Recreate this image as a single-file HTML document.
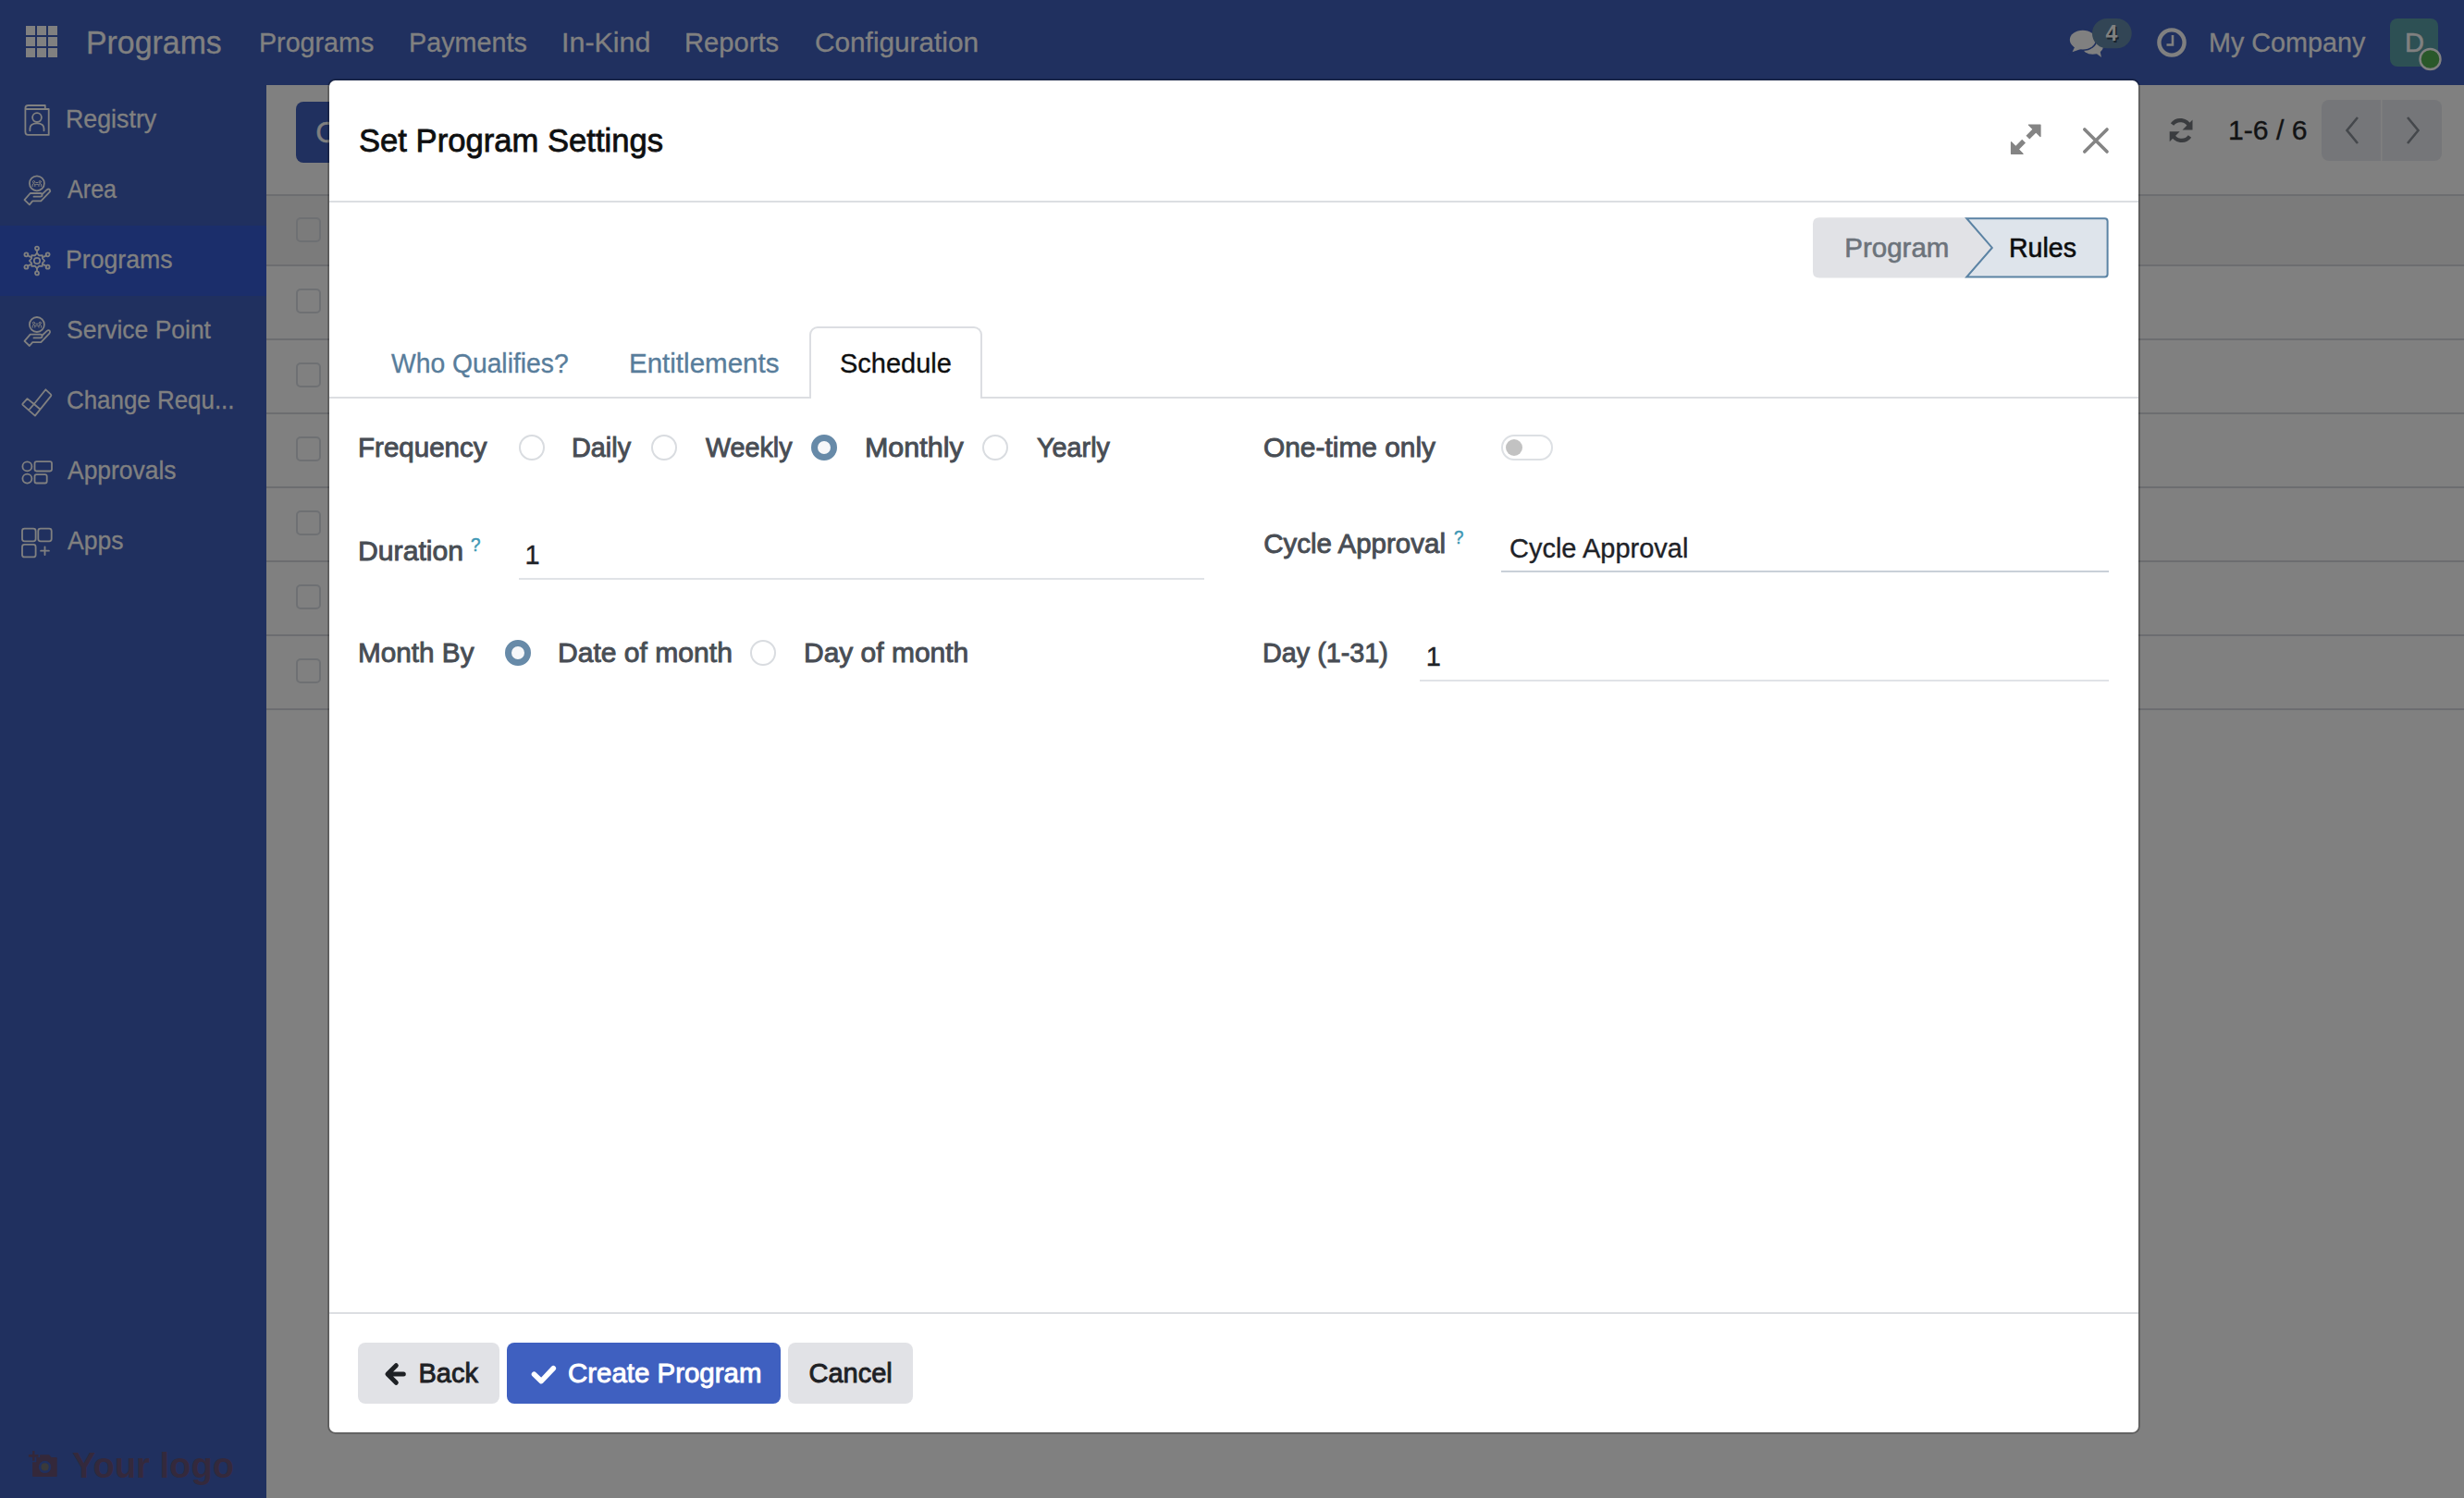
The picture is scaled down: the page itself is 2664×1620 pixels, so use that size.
<!DOCTYPE html>
<html><head><meta charset="utf-8"><title>Set Program Settings</title>
<style>
*{margin:0;padding:0;box-sizing:border-box}
html,body{width:2664px;height:1620px;overflow:hidden;background:#808080;font-family:"Liberation Sans",sans-serif}
.a{position:absolute}
.t{position:absolute;white-space:nowrap;transform-origin:0 0;font-family:"Liberation Sans",sans-serif}
svg{position:absolute;overflow:visible}
.rl{position:absolute;left:288px;width:2376px;height:2px;background:#6c6d70}
.cb{position:absolute;left:320px;width:27px;height:27px;border:2px solid #6e7073;border-radius:5px}
.radio{position:absolute;width:28px;height:28px;border-radius:50%;border:2px solid #d9dce0;background:#fff}
.radio.on{border:7.8px solid #678aa8;background:#f6f7f9}
.btn{position:absolute;border-radius:8px}

</style></head><body>
<!-- navbar -->
<div class=a style="left:0;top:0;width:2664px;height:92px;background:#20305f"></div>
<svg style="left:28px;top:28px" width="34" height="34" viewBox="0 0 34 34" fill="#808080">
<rect x="0" y="0" width="10" height="10"/><rect x="12" y="0" width="10" height="10"/><rect x="24" y="0" width="10" height="10"/>
<rect x="0" y="12" width="10" height="10"/><rect x="12" y="12" width="10" height="10"/><rect x="24" y="12" width="10" height="10"/>
<rect x="0" y="24" width="10" height="10"/><rect x="12" y="24" width="10" height="10"/><rect x="24" y="24" width="10" height="10"/>
</svg>
<!-- chat icon -->
<svg style="left:0;top:0" width="2664" height="92" viewBox="0 0 2664 92">
 <g fill="#808080">
  <ellipse cx="2262.5" cy="50" rx="11.5" ry="8.7"/>
  <path d="M2264 56 L2272 62 L2270 53 Z"/>
 </g>
 <ellipse cx="2251.8" cy="43.1" rx="15.6" ry="12" fill="#20305f"/>
 <path d="M2243 50 L2239.5 56.8 L2252 52.5 Z" fill="#20305f" stroke="#20305f" stroke-width="3"/>
 <g fill="#808080">
  <ellipse cx="2251.8" cy="43.1" rx="14" ry="10.4"/>
  <path d="M2243.5 50 L2240.5 56.2 L2250.5 52.8 Z"/>
 </g>
 <rect x="2262" y="20" width="42.7" height="32.2" rx="16" fill="#324555"/>
 <text x="2284.5" y="45.5" font-family="Liberation Sans" font-size="23" font-weight="700" text-anchor="middle" fill="#18222c">4</text>
 <text x="2283" y="44" font-family="Liberation Sans" font-size="23" font-weight="700" text-anchor="middle" fill="#808080">4</text>
 <!-- clock -->
 <circle cx="2348" cy="46" r="13.6" fill="none" stroke="#808080" stroke-width="4.4"/>
 <path d="M2349 38 V48.5 H2342.5" fill="none" stroke="#808080" stroke-width="2.6"/>
 <!-- avatar -->
 <rect x="2584" y="20" width="52" height="52" rx="8" fill="#2d5054"/>
 <text x="2610.5" y="55.8" font-family="Liberation Sans" font-size="29" text-anchor="middle" fill="#808080" stroke="#808080" stroke-width="0.6">D</text>
 <circle cx="2627.5" cy="64" r="11" fill="#2a582a" stroke="#808080" stroke-width="2.4"/>
</svg>
<!-- sidebar -->
<div class=a style="left:0;top:92px;width:288px;height:1528px;background:#20305f"></div>
<div class=a style="left:0;top:244px;width:288px;height:76px;background:#1b2e6b"></div>
<svg style="left:0;top:0" width="288" height="1620" viewBox="0 0 288 1620" fill="none" stroke="#808080" stroke-width="1.8" stroke-linecap="round" stroke-linejoin="round">
 <!-- registry -->
 <path d="M30.5 114 H48.8 V118 M27.4 118 H52.7 V145.9 H30.5 Q27.4 145.9 27.4 142.8 V117.1 Q27.4 114 30.5 114"/>
 <circle cx="40" cy="127.1" r="4.9"/>
 <path d="M32.4 141.3 V139 Q32.4 133.4 40 133.4 Q47.5 133.4 47.5 139 V141.3"/>
 <!-- area -->
 <g id="hand1">
 <circle cx="39.9" cy="198.3" r="8"/>
 <path d="M35.2 201.5 V200 Q35.2 198.6 36.5 198.6 Q37.8 198.6 37.8 200 M42 200 Q42 198.6 43.3 198.6 Q44.6 198.6 44.6 200 V201.5 M37.8 201.5 V200.6 Q37.8 199.3 39.9 199.3 Q42 199.3 42 200.6 V201.5" stroke-width="1"/>
 <circle cx="36.5" cy="196.6" r="1.1" stroke-width="1"/><circle cx="43.3" cy="196.6" r="1.1" stroke-width="1"/><path d="M38.8 197.5 H41" stroke-width="1"/>
 <path d="M36.5 212.7 H43.7 Q45.6 212.7 45.6 210.85 Q45.6 209 43.9 209 H32.7 L26.5 216.2 L31.9 221.3 L35.2 217.4 H44.3 L53.4 207.9 Q54.8 206.4 53.7 205 Q52.4 203.8 50.7 205.2 L45.3 210.3"/>
 </g>
 <!-- programs (network) -->
 <g transform="translate(40,282)">
  <circle r="3.2"/>
  <path d="M0 -8.2 L2.3 -5.6 L5.8 -5.8 L6 -2.3 L8.2 0 L6 2.3 L5.8 5.8 L2.3 5.6 L0 8.2 L-2.3 5.6 L-5.8 5.8 L-6 2.3 L-8.2 0 L-6 -2.3 L-5.8 -5.8 L-2.3 -5.6 Z" transform="rotate(0)"/>
  <path d="M0 -8.2 V-11.6 M7.1 -4.1 L10.1 -5.8 M7.1 4.1 L10.1 5.8 M0 8.2 V11.6 M-7.1 4.1 L-10.1 5.8 M-7.1 -4.1 L-10.1 -5.8"/>
  <circle cy="-13.4" r="2"/><circle cx="11.6" cy="-6.7" r="2"/><circle cx="11.6" cy="6.7" r="2"/><circle cy="13.4" r="2"/><circle cx="-11.6" cy="6.7" r="2"/><circle cx="-11.6" cy="-6.7" r="2"/>
 </g>
 <!-- service point (same as area) -->
 <g transform="translate(0,152.7)">
 <circle cx="39.9" cy="198.3" r="8"/>
 <path d="M35.2 201.5 V200 Q35.2 198.6 36.5 198.6 Q37.8 198.6 37.8 200 M42 200 Q42 198.6 43.3 198.6 Q44.6 198.6 44.6 200 V201.5 M37.8 201.5 V200.6 Q37.8 199.3 39.9 199.3 Q42 199.3 42 200.6 V201.5" stroke-width="1"/>
 <circle cx="36.5" cy="196.6" r="1.1" stroke-width="1"/><circle cx="43.3" cy="196.6" r="1.1" stroke-width="1"/><path d="M38.8 197.5 H41" stroke-width="1"/>
 <path d="M36.5 212.7 H43.7 Q45.6 212.7 45.6 210.85 Q45.6 209 43.9 209 H32.7 L26.5 216.2 L31.9 221.3 L35.2 217.4 H44.3 L53.4 207.9 Q54.8 206.4 53.7 205 Q52.4 203.8 50.7 205.2 L45.3 210.3"/>
 </g>
 <!-- change request -->
 <path d="M37.9 449.6 L24.6 437.8 Q24 437.2 24.5 436.6 L29.5 431.1 L36.8 437 L49.4 421.3 L54.8 426.3 Q55.9 427.3 55 428.4 Z M31.2 443.4 L36.8 437 L43.3 442.5"/>
 <!-- approvals -->
 <circle cx="29.4" cy="504.4" r="5"/><circle cx="29.4" cy="517.6" r="5"/>
 <rect x="37.5" y="499.2" width="18.5" height="10.3" rx="2"/>
 <rect x="37.5" y="513.2" width="13.2" height="9.3" rx="2"/>
 <!-- apps -->
 <rect x="24" y="571.7" width="14.6" height="13.6" rx="2.5"/>
 <rect x="41.3" y="571.7" width="14.4" height="13.6" rx="2.5"/>
 <rect x="24" y="588.9" width="14.6" height="13.5" rx="2.5"/>
 <path d="M48.5 591.3 V600.1 M44.1 595.7 H52.9"/>
</svg>
<!-- your logo camera -->
<svg style="left:0;top:0" width="288" height="1620" viewBox="0 0 288 1620">
 <path d="M39.3 1576 H43.2 V1573.2 H53 L55.6 1576 H60.7 Q61.7 1576 61.7 1577 V1596 Q61.7 1597 60.7 1597 H36.1 Q35.1 1597 35.1 1596 V1581.2 H39.3 Z" fill="#34283a"/>
 <path d="M35.1 1569 H37.5 V1573.1 H41.5 V1575.7 H37.5 V1579.7 H35.1 V1575.7 H30.9 V1573.1 H35.1 Z" fill="#34283a"/>
 <circle cx="48.55" cy="1586.4" r="6.7" fill="#20305f"/><circle cx="48.55" cy="1586.4" r="4.1" fill="#3a3a3a"/>
</svg>
<!-- list background -->
<div class=a style="left:288px;top:212px;width:2376px;height:75px;background:#7b7b7b"></div>
<div class=rl style="top:210px"></div>
<div class=rl style="top:286px"></div>
<div class=rl style="top:366px"></div>
<div class=rl style="top:446px"></div>
<div class=rl style="top:526px"></div>
<div class=rl style="top:606px"></div>
<div class=rl style="top:686px"></div>
<div class=rl style="top:766px"></div>
<div class=cb style="top:235.2px"></div>
<div class=cb style="top:311.5px"></div>
<div class=cb style="top:391.5px"></div>
<div class=cb style="top:471.5px"></div>
<div class=cb style="top:551.5px"></div>
<div class=cb style="top:631.5px"></div>
<div class=cb style="top:711.5px"></div>
<!-- C button -->
<div class=btn style="left:320px;top:110px;width:120px;height:66px;background:#20305f"></div>
<div class=t style="left:341.2px;top:125.8px;font-size:32px;line-height:35.75px;color:#808080;-webkit-text-stroke:0.5px #808080">C</div>
<!-- refresh + pager -->
<svg style="left:0;top:0" width="2664" height="200" viewBox="0 0 2664 200">
 <path d="M2367.5 137 A11 11 0 0 0 2348.5 134.5 M2348.5 145 A11 11 0 0 0 2367.5 147.5" fill="none" stroke="#3a3c3f" stroke-width="4.2"/>
 <path d="M2370.5 129.5 V140.5 H2359.5 Z M2345.7 153.3 V142.3 H2356.7 Z" fill="#3a3c3f"/>
 <rect x="2510" y="108" width="130" height="66" rx="8" fill="#757679"/>
 <rect x="2574" y="108" width="1.5" height="66" fill="#808080"/>
 <path d="M2549 127 L2537.5 141 L2549 155 M2603 127 L2614.5 141 L2603 155" fill="none" stroke="#45484c" stroke-width="2.6"/>
</svg>
<!-- modal -->
<div class=a style="left:356px;top:87px;width:1956px;height:1461px;background:#fff;border-radius:6.5px;height:1462px;box-shadow:0 0 0 1.8px rgba(0,0,0,.27)"></div>
<div class=a style="left:356px;top:217px;width:1956px;height:2px;background:#dcdee2"></div>
<div class=a style="left:356px;top:1419px;width:1956px;height:2px;background:#dcdee2"></div>
<!-- header icons -->
<svg style="left:0;top:0" width="2664" height="200" viewBox="0 0 2664 200">
 <path d="M2193.4 135 H2206 V147.6 Z M2187.1 166.3 H2174.5 V153.7 Z" fill="#848484" stroke="#848484" stroke-width="1.2" stroke-linejoin="round"/>
 <path d="M2201.5 139.5 L2192.4 148.6 M2179 161.8 L2188.1 152.7" stroke="#848484" stroke-width="5.4"/>
 <path d="M2253.8 140 L2278 164 M2278 140 L2253.8 164" stroke="#848484" stroke-width="3.6" stroke-linecap="round"/>
</svg>
<!-- statusbar -->
<svg style="left:0;top:0" width="2664" height="320" viewBox="0 0 2664 320">
 <path d="M1967 235.2 H2126 L2154.5 267.9 L2126 300.6 H1967 Q1960 300.6 1960 293.6 V242.2 Q1960 235.2 1967 235.2 Z" fill="#e1e2e6"/>
 <path d="M2126.3 236.2 H2275.5 Q2278.6 236.2 2278.6 239.3 V296.5 Q2278.6 299.6 2275.5 299.6 H2126.3 L2153.8 267.9 Z" fill="#dee4eb" stroke="#5b83a4" stroke-width="2"/>
</svg>
<!-- tabs -->
<div class=a style="left:356px;top:429px;width:1956px;height:2px;background:#dcdee2"></div>
<div class=a style="left:875px;top:353px;width:187px;height:78px;background:#fff;border:2px solid #dcdee2;border-bottom:none;border-radius:9px 9px 0 0"></div>
<!-- radios -->
<div class=radio style="left:561px;top:470px"></div>
<div class=radio style="left:704px;top:470px"></div>
<div class="radio on" style="left:877px;top:470px"></div>
<div class=radio style="left:1062px;top:470px"></div>
<div class="radio on" style="left:546px;top:692px"></div>
<div class=radio style="left:811px;top:692px"></div>
<!-- toggle -->
<div class=a style="left:1623px;top:470px;width:56px;height:28px;border-radius:14px;border:2px solid #dde0e4;background:#fff"></div>
<div class=a style="left:1627.7px;top:474.7px;width:18.6px;height:18.6px;border-radius:50%;background:#c2c2c2"></div>
<!-- underlines -->
<div class=a style="left:561px;top:625px;width:741px;height:2px;background:#e0e3e7"></div>
<div class=a style="left:1623px;top:617px;width:657px;height:2px;background:#c9d0d8"></div>
<div class=a style="left:1535px;top:735px;width:745px;height:2px;background:#e0e3e7"></div>
<!-- footer buttons -->
<div class=btn style="left:387px;top:1452px;width:153px;height:65.5px;background:#e1e2e6"></div>
<div class=btn style="left:548px;top:1452px;width:296px;height:65.5px;background:#3f60c0"></div>
<div class=btn style="left:852px;top:1452px;width:135px;height:65.5px;background:#e1e2e6"></div>
<svg style="left:0;top:0" width="1000" height="1620" viewBox="0 0 1000 1620">
 <path d="M436.3 1486 H421 M428.3 1476.7 L419 1486 L428.3 1495.3" fill="none" stroke="#1e2125" stroke-width="5" stroke-linecap="round" stroke-linejoin="round"/>
 <path d="M577.5 1486.3 L585.2 1493.6 L598.3 1479.8" fill="none" stroke="#fff" stroke-width="5.6" stroke-linecap="round" stroke-linejoin="round"/>
</svg>

<div class=t style='left:92.60px;top:25.90px;font-size:35.0px;line-height:39.102px;color:#808080;font-weight:400;-webkit-text-stroke:0.35px #808080;transform:scaleX(0.9676)'>Programs</div>
<div class=t style='left:279.72px;top:30.20px;font-size:29.0px;line-height:32.399px;color:#808080;font-weight:400;-webkit-text-stroke:0.35px #808080;transform:scaleX(0.9886)'>Programs</div>
<div class=t style='left:442.02px;top:30.20px;font-size:29.0px;line-height:32.399px;color:#808080;font-weight:400;-webkit-text-stroke:0.35px #808080;transform:scaleX(0.9913)'>Payments</div>
<div class=t style='left:607.20px;top:30.20px;font-size:29.0px;line-height:32.399px;color:#808080;font-weight:400;-webkit-text-stroke:0.35px #808080;transform:scaleX(1.0500)'>In-Kind</div>
<div class=t style='left:740.49px;top:30.20px;font-size:29.0px;line-height:32.399px;color:#808080;font-weight:400;-webkit-text-stroke:0.35px #808080;transform:scaleX(1.0051)'>Reports</div>
<div class=t style='left:881.27px;top:30.20px;font-size:29.0px;line-height:32.399px;color:#808080;font-weight:400;-webkit-text-stroke:0.35px #808080;transform:scaleX(1.0265)'>Configuration</div>
<div class=t style='left:2388.22px;top:30.20px;font-size:29.0px;line-height:32.399px;color:#808080;font-weight:400;-webkit-text-stroke:0.35px #808080;transform:scaleX(0.9917)'>My Company</div>
<div class=t style='left:71.05px;top:113.70px;font-size:27.5px;line-height:30.723px;color:#808080;font-weight:400;-webkit-text-stroke:0.35px #808080;transform:scaleX(0.9737)'>Registry</div>
<div class=t style='left:73.00px;top:189.75px;font-size:27.5px;line-height:30.723px;color:#808080;font-weight:400;-webkit-text-stroke:0.35px #808080;transform:scaleX(0.9138)'>Area</div>
<div class=t style='left:71.06px;top:265.80px;font-size:27.5px;line-height:30.723px;color:#808080;font-weight:400;-webkit-text-stroke:0.35px #808080;transform:scaleX(0.9701)'>Programs</div>
<div class=t style='left:72.04px;top:341.85px;font-size:27.5px;line-height:30.723px;color:#808080;font-weight:400;-webkit-text-stroke:0.35px #808080;transform:scaleX(0.9627)'>Service Point</div>
<div class=t style='left:72.06px;top:417.90px;font-size:27.5px;line-height:30.723px;color:#808080;font-weight:400;-webkit-text-stroke:0.35px #808080;transform:scaleX(0.9421)'>Change Requ...</div>
<div class=t style='left:73.00px;top:493.95px;font-size:27.5px;line-height:30.723px;color:#808080;font-weight:400;-webkit-text-stroke:0.35px #808080;transform:scaleX(0.9615)'>Approvals</div>
<div class=t style='left:73.00px;top:570.00px;font-size:27.5px;line-height:30.723px;color:#808080;font-weight:400;-webkit-text-stroke:0.35px #808080;transform:scaleX(0.9661)'>Apps</div>
<div class=t style='left:388.02px;top:133.10px;font-size:35.5px;line-height:39.661px;color:#0e0f10;font-weight:400;-webkit-text-stroke:0.8px #0e0f10;transform:scaleX(0.9753)'>Set Program Settings</div>
<div class=t style='left:1994.30px;top:252.10px;font-size:29.5px;line-height:32.957px;color:#6c737b;font-weight:400;-webkit-text-stroke:0.6px #6c737b'>Program</div>
<div class=t style='left:2171.97px;top:252.10px;font-size:29.5px;line-height:32.957px;color:#0c0d0e;font-weight:400;-webkit-text-stroke:0.6px #0c0d0e;transform:scaleX(0.9671)'>Rules</div>
<div class=t style='left:423.30px;top:376.10px;font-size:30.0px;line-height:33.516px;color:#587d9b;font-weight:400;-webkit-text-stroke:0.35px #587d9b;transform:scaleX(0.9419)'>Who Qualifies?</div>
<div class=t style='left:680.43px;top:376.10px;font-size:30.0px;line-height:33.516px;color:#587d9b;font-weight:400;-webkit-text-stroke:0.35px #587d9b;transform:scaleX(0.9840)'>Entitlements</div>
<div class=t style='left:908.03px;top:376.10px;font-size:30.0px;line-height:33.516px;color:#0e0f10;font-weight:400;-webkit-text-stroke:0.35px #0e0f10;transform:scaleX(0.9659)'>Schedule</div>
<div class=t style='left:387.16px;top:467.80px;font-size:29.0px;line-height:32.399px;color:#484d54;font-weight:400;-webkit-text-stroke:0.9px #484d54;transform:scaleX(1.0185)'>Frequency</div>
<div class=t style='left:618.21px;top:467.80px;font-size:29.0px;line-height:32.399px;color:#484d54;font-weight:400;-webkit-text-stroke:0.9px #484d54;transform:scaleX(0.9937)'>Daily</div>
<div class=t style='left:762.60px;top:467.80px;font-size:29.0px;line-height:32.399px;color:#484d54;font-weight:400;-webkit-text-stroke:0.9px #484d54;transform:scaleX(0.9895)'>Weekly</div>
<div class=t style='left:934.90px;top:467.80px;font-size:29.0px;line-height:32.399px;color:#484d54;font-weight:400;-webkit-text-stroke:0.9px #484d54;transform:scaleX(1.0500)'>Monthly</div>
<div class=t style='left:1121.40px;top:467.80px;font-size:29.0px;line-height:32.399px;color:#484d54;font-weight:400;-webkit-text-stroke:0.9px #484d54;transform:scaleX(0.9925)'>Yearly</div>
<div class=t style='left:1365.99px;top:468.00px;font-size:29.5px;line-height:32.957px;color:#484d54;font-weight:400;-webkit-text-stroke:0.9px #484d54;transform:scaleX(1.0131)'>One-time only</div>
<div class=t style='left:387.45px;top:580.20px;font-size:29.5px;line-height:32.957px;color:#484d54;font-weight:400;-webkit-text-stroke:0.9px #484d54;transform:scaleX(1.0231)'>Duration</div>
<div class=t style='left:567.60px;top:584.00px;font-size:29px;line-height:32.399px;color:#1e2227;font-weight:400;-webkit-text-stroke:0.35px #1e2227'>1</div>
<div class=t style='left:1366.20px;top:572.10px;font-size:29.5px;line-height:32.957px;color:#484d54;font-weight:400;-webkit-text-stroke:0.9px #484d54'>Cycle Approval</div>
<div class=t style='left:1631.53px;top:575.60px;font-size:30.0px;line-height:33.516px;color:#1e2227;font-weight:400;-webkit-text-stroke:0.35px #1e2227;transform:scaleX(0.9662)'>Cycle Approval</div>
<div class=t style='left:509.08px;top:578.00px;font-size:20.5px;line-height:22.903px;color:#3f98b5;font-weight:400;-webkit-text-stroke:0.5px #3f98b5;transform:scaleX(0.9200)'>?</div>
<div class=t style='left:1572.29px;top:570.00px;font-size:20.5px;line-height:22.903px;color:#3f98b5;font-weight:400;-webkit-text-stroke:0.5px #3f98b5;transform:scaleX(0.9100)'>?</div>
<div class=t style='left:386.99px;top:690.30px;font-size:29.5px;line-height:32.957px;color:#484d54;font-weight:400;-webkit-text-stroke:0.9px #484d54;transform:scaleX(1.0073)'>Month By</div>
<div class=t style='left:602.96px;top:690.30px;font-size:29.5px;line-height:32.957px;color:#484d54;font-weight:400;-webkit-text-stroke:0.9px #484d54;transform:scaleX(1.0192)'>Date of month</div>
<div class=t style='left:868.57px;top:690.30px;font-size:29.5px;line-height:32.957px;color:#484d54;font-weight:400;-webkit-text-stroke:0.9px #484d54;transform:scaleX(1.0157)'>Day of month</div>
<div class=t style='left:1365.21px;top:690.30px;font-size:29.0px;line-height:32.399px;color:#484d54;font-weight:400;-webkit-text-stroke:0.9px #484d54;transform:scaleX(0.9925)'>Day (1-31)</div>
<div class=t style='left:1541.80px;top:694.30px;font-size:29px;line-height:32.399px;color:#1e2227;font-weight:400;-webkit-text-stroke:0.35px #1e2227'>1</div>
<div class=t style='left:452.50px;top:1469.20px;font-size:29.0px;line-height:32.399px;color:#1e2125;font-weight:400;-webkit-text-stroke:0.9px #1e2125'>Back</div>
<div class=t style='left:613.98px;top:1469.20px;font-size:29.0px;line-height:32.399px;color:#ffffff;font-weight:400;-webkit-text-stroke:0.9px #ffffff;transform:scaleX(1.0152)'>Create Program</div>
<div class=t style='left:874.50px;top:1469.20px;font-size:29.0px;line-height:32.399px;color:#1e2125;font-weight:400;-webkit-text-stroke:0.9px #1e2125'>Cancel</div>
<div class=t style='left:2408.62px;top:125.20px;font-size:29.0px;line-height:32.399px;color:#121314;font-weight:400;-webkit-text-stroke:0.35px #121314;transform:scaleX(1.0418)'>1-6 / 6</div>
<div class=t style='left:77.72px;top:1562.90px;font-size:39.0px;line-height:43.571px;color:#34293c;font-weight:700;transform:scaleX(0.9768)'>Your logo</div>
</body></html>
